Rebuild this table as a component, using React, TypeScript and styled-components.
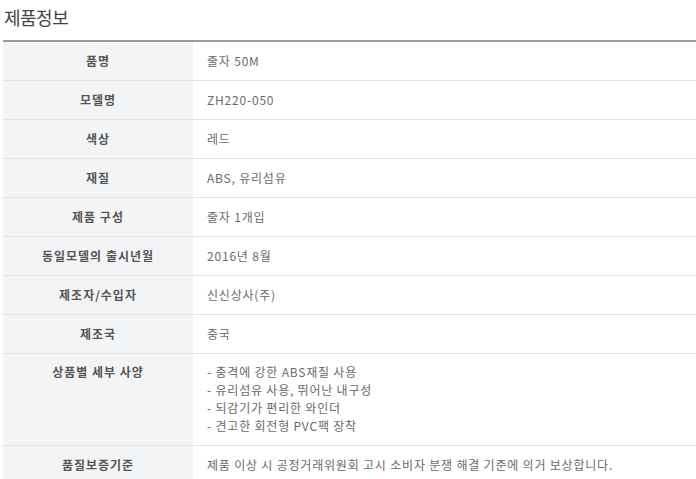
import React from 'react'
import styled, { createGlobalStyle } from 'styled-components'

const GlobalStyle = createGlobalStyle`
  html, body {
    margin: 0;
    padding: 0;
    background: #fff;
  }
  body {
    font-family: "Noto Sans CJK KR", "Noto Sans", sans-serif;
  }
`

const Wrap = styled.div`
  width: 696px;
  padding: 0 0 0 3px;
  box-sizing: border-box;
`

const Title = styled.h3`
  margin: 0;
  padding: 5px 0 0 1px;
  height: 40px;
  box-sizing: border-box;
  font-size: 18px;
  font-weight: 400;
  line-height: 24px;
  color: #444;
  letter-spacing: -0.5px;
`

const Table = styled.table`
  width: 100%;
  border-collapse: collapse;
  border-top: 2px solid #9b9b9b;
  table-layout: fixed;
`

const Row = styled.tr`
  border-bottom: 1px solid #e2e2e2;
`

const Label = styled.th<{ top?: boolean }>`
  width: 190px;
  height: 38px;
  padding: ${({ top }) => (top ? '9px 0 0' : '0')};
  vertical-align: ${({ top }) => (top ? 'top' : 'middle')};
  background: #f3f4f6;
  font-size: 12px;
  font-weight: 700;
  color: #555;
  letter-spacing: 1px;
  text-align: center;
  line-height: 18px;
`

const Value = styled.td`
  height: 38px;
  padding: 0 0 0 14px;
  font-size: 12px;
  color: #6a6a6a;
  line-height: 18px;
  letter-spacing: 0.8px;
  vertical-align: middle;
`

const SpecValue = styled(Value)`
  padding: 9px 0 10px 14px;
  vertical-align: top;
`

const rows: [string, string][] = [
  ['품명', '줄자 50M'],
  ['모델명', 'ZH220-050'],
  ['색상', '레드'],
  ['재질', 'ABS, 유리섬유'],
  ['제품 구성', '줄자 1개입'],
  ['동일모델의 출시년월', '2016년 8월'],
  ['제조자/수입자', '신신상사(주)'],
  ['제조국', '중국'],
]

const specs = [
  '- 충격에 강한 ABS재질 사용',
  '- 유리섬유 사용, 뛰어난 내구성',
  '- 되감기가 편리한 와인더',
  '- 견고한 회전형 PVC팩 장착',
]

export default function App() {
  return (
    <Wrap>
      <GlobalStyle />
      <Title>제품정보</Title>
      <Table>
        <tbody>
          {rows.map(([k, v]) => (
            <Row key={k}>
              <Label>{k}</Label>
              <Value>{v}</Value>
            </Row>
          ))}
          <Row>
            <Label top>상품별 세부 사양</Label>
            <SpecValue>
              {specs.map((s) => (
                <div key={s}>{s}</div>
              ))}
            </SpecValue>
          </Row>
          <Row>
            <Label>품질보증기준</Label>
            <Value>제품 이상 시 공정거래위원회 고시 소비자 분쟁 해결 기준에 의거 보상합니다.</Value>
          </Row>
        </tbody>
      </Table>
    </Wrap>
  )
}
